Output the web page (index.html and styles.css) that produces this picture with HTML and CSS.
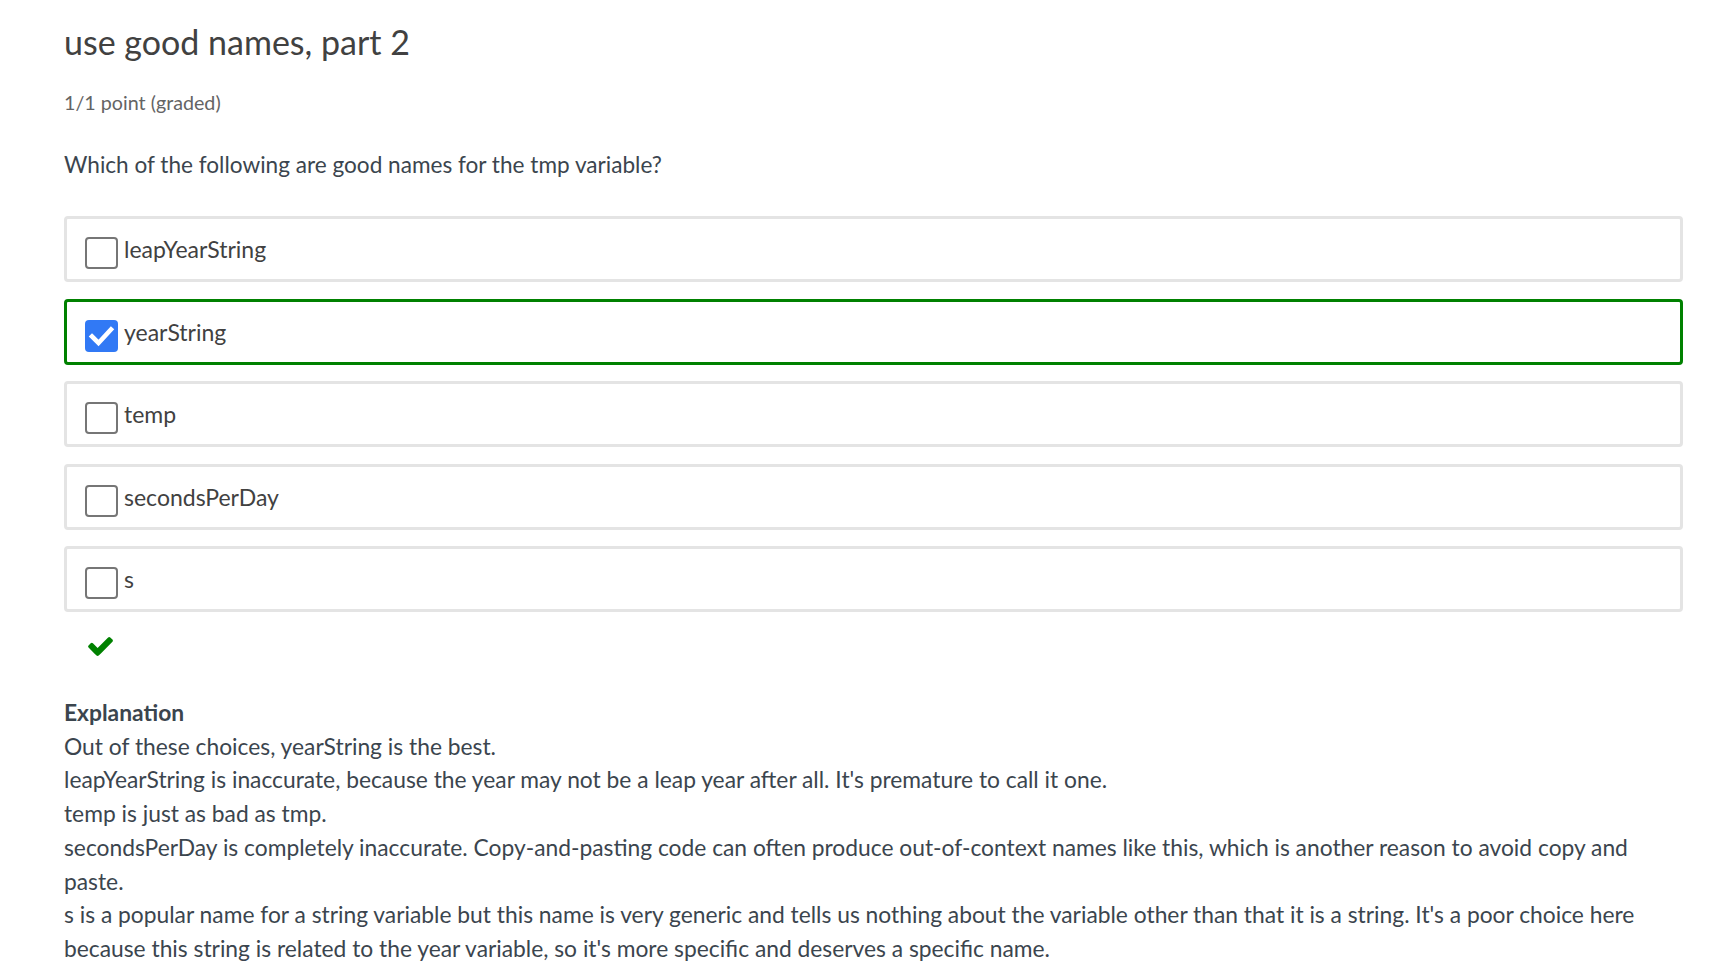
FILE: index.html
```html
<!DOCTYPE html>
<html lang="en">
<head>
<meta charset="utf-8">
<title>use good names, part 2</title>
<link rel="stylesheet" href="styles.css">
</head>
<body>
<div class="problem">
  <h2 class="title">use good names, part 2</h2>
  <div class="points">1/1 point (graded)</div>
  <p class="question">Which of the following are good names for the tmp variable?</p>
  <ul class="choices">
    <li class="choice">
      <span class="cb"></span>
      <span class="label">leapYearString</span>
    </li>
    <li class="choice correct">
      <span class="cb checked">
        <svg viewBox="0 0 33 32" width="33" height="32" aria-hidden="true">
          <rect x="0" y="0" width="33" height="32" rx="4" fill="#3179f5"/>
          <path d="M7 16.5 L13.5 23 L26 9.5" fill="none" stroke="#fff" stroke-width="4.6" stroke-linecap="square" stroke-linejoin="miter"/>
        </svg>
      </span>
      <span class="label">yearString</span>
    </li>
    <li class="choice">
      <span class="cb"></span>
      <span class="label">temp</span>
    </li>
    <li class="choice">
      <span class="cb"></span>
      <span class="label">secondsPerDay</span>
    </li>
    <li class="choice">
      <span class="cb"></span>
      <span class="label">s</span>
    </li>
  </ul>
  <div class="status">
    <svg viewBox="121 334 1550 1188" width="25" height="19" aria-hidden="true">
      <path fill="#008100" d="M1671 566q0 40-28 68l-724 724-136 136q-28 28-68 28t-68-28l-136-136-362-362q-28-28-28-68t28-68l136-136q28-28 68-28t68 28l294 295 656-657q28-28 68-28t68 28l136 136q28 28 28 68z"/>
    </svg>
  </div>
  <div class="explanation">
    <p class="ex-title">Explanation</p>
    <p>Out of these choices, yearString is the best.</p>
    <p>leapYearString is inaccurate, because the year may not be a leap year after all. It's premature to call it one.</p>
    <p>temp is just as bad as tmp.</p>
    <p>secondsPerDay is completely inaccurate. Copy-and-pasting code can often produce out-of-context names like this, which is another reason to avoid copy and paste.</p>
    <p>s is a popular name for a string variable but this name is very generic and tells us nothing about the variable other than that it is a string. It's a poor choice here because this string is related to the year variable, so it's more specific and deserves a specific name.</p>
  </div>
</div>
</body>
</html>
```

FILE: styles.css
```css
html, body {
  margin: 0;
  padding: 0;
  background: #ffffff;
}

body {
  font-family: Lato, "Open Sans", "Liberation Sans", sans-serif;
}

.problem {
  padding: 20px 33px 0 64px;
}

.title {
  margin: 0;
  font-size: 34px;
  line-height: 44px;
  font-weight: 400;
  color: #414141;
}

.points {
  margin-top: 27px;
  font-size: 19.7px;
  line-height: 24px;
  color: #646464;
}

.question {
  margin: 35px 0 0 0;
  font-size: 22.6px;
  line-height: 30px;
  color: #3b454e;
}

.choices {
  list-style: none;
  margin: 36px 0 0 0;
  padding: 0;
  display: flex;
  flex-direction: column;
  gap: 16.5px;
}

.choice {
  box-sizing: border-box;
  height: 66px;
  border: 3px solid #e4e4e4;
  border-radius: 4px;
  padding: 18px 18px 0 18px;
  display: flex;
  align-items: flex-start;
  gap: 6px;
}

.choice.correct {
  border-color: #008100;
}

.cb {
  box-sizing: border-box;
  flex: none;
  width: 33px;
  height: 32px;
  border: 2px solid #767676;
  border-radius: 4px;
  background: #ffffff;
}

.cb.checked {
  border: none;
  background: none;
}

.cb svg {
  display: block;
}

.label {
  margin-top: -3px;
  font-size: 23px;
  line-height: 30px;
  color: #414141;
}

.status {
  margin: 25px 0 0 24px;
  height: 19px;
}

.status svg {
  display: block;
}

.explanation {
  margin-top: 40px;
  font-size: 22.8px;
  line-height: 33.7px;
  color: #3b454e;
}

.explanation p {
  margin: 0;
}

.explanation .ex-title {
  font-weight: 700;
}
```
